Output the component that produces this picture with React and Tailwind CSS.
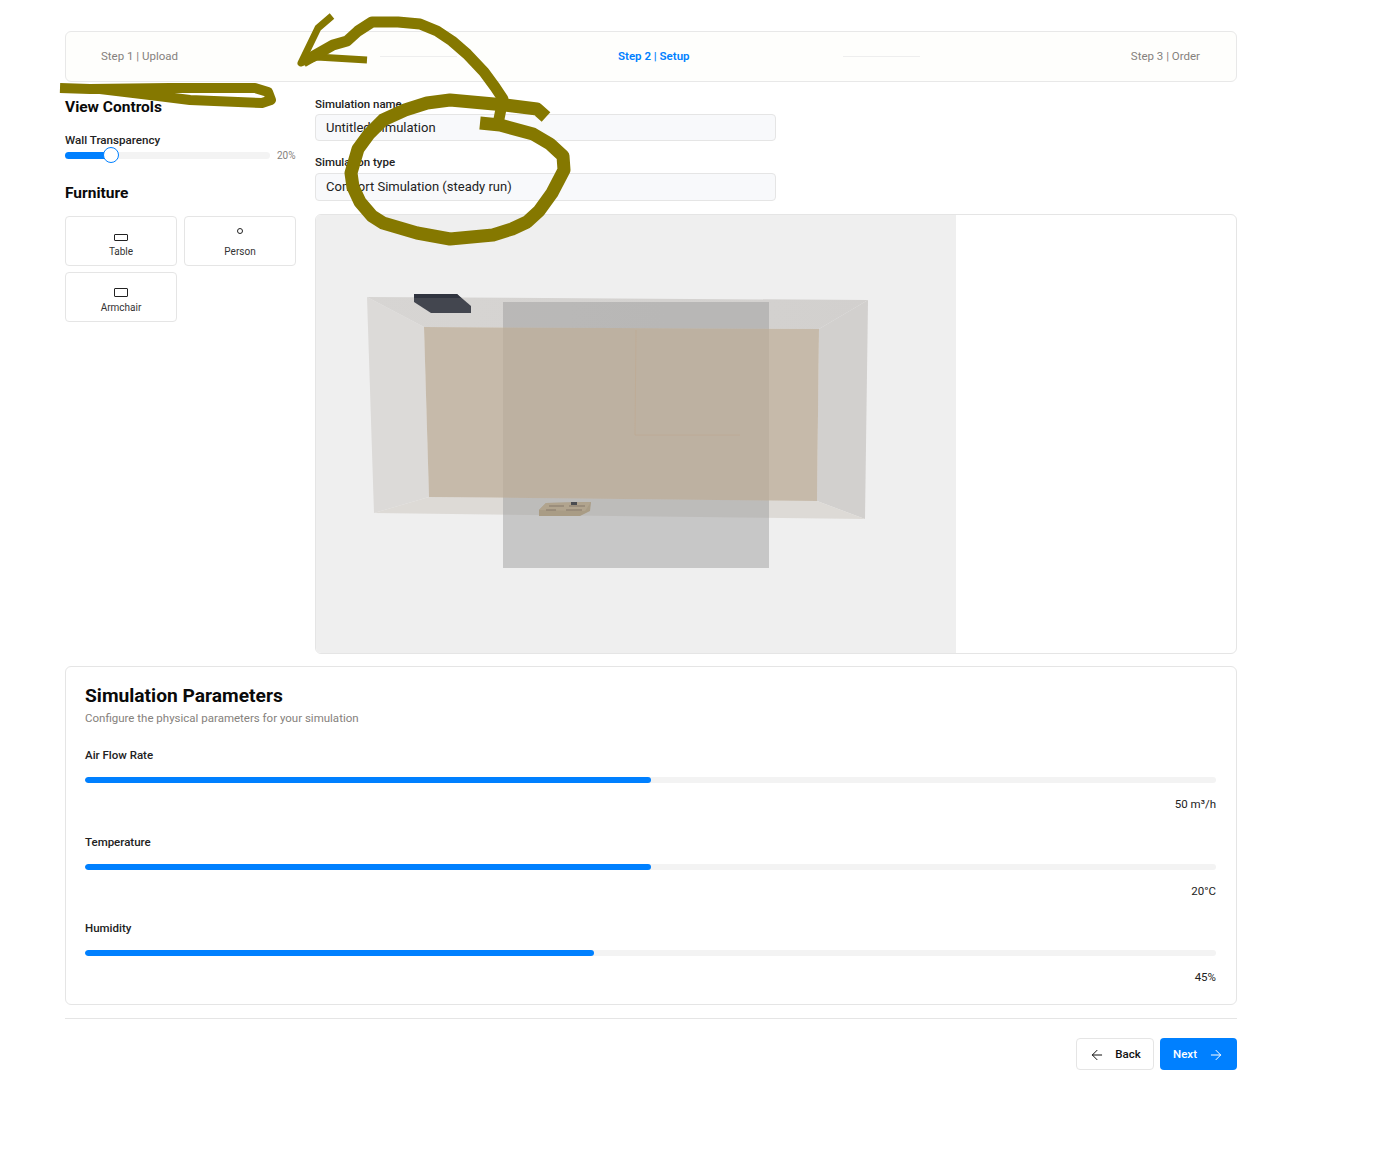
import { ArrowLeft, ArrowRight } from 'lucide-react'

const params = [
  { label: 'Air Flow Rate', value: '50 m³/h', fill: 'w-[50%]' },
  { label: 'Temperature', value: '20°C', fill: 'w-[50%]' },
  { label: 'Humidity', value: '45%', fill: 'w-[45%]' },
]

function Stepper() {
  return (
    <div className="flex h-[51px] items-center rounded-md border border-[#e8e8e8] bg-[#fefefc] pl-[35px] pr-[36px] text-[11.5px] text-[#85817c]">
      <span className="w-[279px]">Step 1 | Upload</span>
      <div className="h-px w-[77px] bg-[#eeeeee]" />
      <span className="ml-[161px] font-semibold text-[#0080ff]">Step 2 | Setup</span>
      <div className="ml-[153px] h-px w-[77px] bg-[#eeeeee]" />
      <span className="ml-auto">Step 3 | Order</span>
    </div>
  )
}

function FurnitureButton({ label, children }) {
  return (
    <button className="flex h-[50px] flex-col items-center justify-end rounded border border-[#e5e5e5] bg-white pb-[6px] text-[10px] leading-[14px] text-[#333333]">
      {children}
      <span className="mt-[4px]">{label}</span>
    </button>
  )
}

function ViewControls() {
  return (
    <aside className="w-[231px] shrink-0">
      <h2 className="mt-[-1px] text-[15.5px] leading-[20px] font-bold text-[#0a0a0a]">View Controls</h2>
      <label className="mt-[15px] block text-[11.6px] leading-4 font-medium text-[#222222]">Wall Transparency</label>
      <div className="mt-[-1px] flex h-4 items-center gap-[7px]">
        <div className="relative h-[7px] w-[205px] rounded-full bg-[#f3f3f3]">
          <div className="h-full w-[46px] rounded-full bg-[#0080ff]" />
          <div className="absolute top-[-5px] left-[38px] size-4 rounded-full border border-[#0080ff] bg-white" />
        </div>
        <span className="text-[10px] text-[#85817c]">20%</span>
      </div>
      <h2 className="mt-[20px] text-[15.5px] leading-[20px] font-bold text-[#0a0a0a]">Furniture</h2>
      <div className="mt-[13px] grid grid-cols-[112px_112px] gap-x-[7px] gap-y-[6px]">
        <FurnitureButton label="Table">
          <span className="h-[7px] w-[14px] rounded-[1px] border-[1.5px] border-[#222222]" />
        </FurnitureButton>
        <FurnitureButton label="Person">
          <span className="mb-[7px] size-[6px] rounded-full border-[1.5px] border-[#222222]" />
        </FurnitureButton>
        <FurnitureButton label="Armchair">
          <span className="h-[9px] w-[14px] rounded-[1px] border-[1.5px] border-[#222222]" />
        </FurnitureButton>
      </div>
    </aside>
  )
}

function Scene() {
  return (
    <svg className="h-full w-[640px] shrink-0 bg-[#efefef]" viewBox="316 215 640 438">
      <defs>
        <linearGradient id="topWall" x1="0" x2="1" y1="0" y2="0">
          <stop offset="0" stopColor="#d7d5d3" />
          <stop offset="1" stopColor="#d2d0ce" />
        </linearGradient>
      </defs>
      <polygon points="367,297 424,327 429,497 374,513" fill="#dcdad8" />
      <polygon points="367,297 868,300 819,329 424,327" fill="url(#topWall)" />
      <polygon points="868,300 865,519 817,501 819,329" fill="#d2d0ce" />
      <polygon points="374,513 429,497 817,501 865,519" fill="#dddad6" />
      <rect x="503" y="302" width="266" height="266" fill="#9a9a9a" fillOpacity="0.48" />
      <polygon points="424,327 819,329 817,501 429,497" fill="#b9aa94" fillOpacity="0.76" />
      <path d="M636 330 L635 435 L740 435" fill="none" stroke="#bfa98f" strokeOpacity="0.6" />
      <polygon points="414,294 457,294 471,306 471,313 431,313 414,302" fill="#43464f" />
      <polygon points="414,294 457,294 461,298 414,298" fill="#30343f" />
      <polygon points="546,503 591,502 590,511 580,516 539,516 539,510" fill="#a99c85" />
      <polygon points="546,503 591,502 585,511 539,510" fill="#b1a48e" />
      <path d="M549 506 H564 M569 506 H585 M546 510 H556 M566 510 H582" stroke="#85796a" strokeWidth="1" />
      <rect x="571" y="502" width="6" height="3" fill="#4a4c50" />
    </svg>
  )
}

function SetupPanel() {
  return (
    <div className="min-w-0 flex-1">
      <label className="mt-[-2px] block text-[11.5px] leading-4 font-medium text-[#222222]">Simulation name</label>
      <div className="mt-[2px] flex h-[27px] w-[461px] items-center rounded border border-[#e5e5e5] bg-[#f8f9fb] px-[10px] text-[13px] text-[#222222]">
        Untitled Simulation
      </div>
      <label className="mt-[13px] block text-[11.5px] leading-4 font-medium text-[#222222]">Simulation type</label>
      <div className="mt-[3px] flex h-[28px] w-[461px] items-center rounded border border-[#e5e5e5] bg-[#f8f9fb] px-[10px] text-[13px] text-[#222222]">
        Comfort Simulation (steady run)
      </div>
      <div className="mt-[13px] flex h-[440px] overflow-hidden rounded-md border border-[#e5e5e5] bg-white">
        <Scene />
      </div>
    </div>
  )
}

function ParameterCard() {
  return (
    <section className="mt-3 h-[339px] rounded-md border border-[#e5e5e5] bg-white pr-[20px] pl-[19px] pt-[17px]">
      <h2 className="text-[19.2px] leading-[24px] font-bold text-[#0a0a0a]">Simulation Parameters</h2>
      <p className="mt-[2px] text-[11.5px] leading-4 text-[#85817c]">Configure the physical parameters for your simulation</p>
      <div className="mt-[21px] flex flex-col gap-[21.5px]">
        {params.map((p) => (
          <div key={p.label} className="h-[65px]">
            <div className="text-[11.5px] leading-4 font-medium text-[#222222]">{p.label}</div>
            <div className="mt-[14px] h-[6px] overflow-hidden rounded-full bg-[#f3f3f3]">
              <div className={`h-full rounded-full bg-[#0080ff] ${p.fill}`} />
            </div>
            <div className="mt-[13px] text-right text-[11.5px] leading-4 text-[#222222]">{p.value}</div>
          </div>
        ))}
      </div>
    </section>
  )
}

function Scribbles() {
  return (
    <svg className="pointer-events-none absolute top-0 left-0 h-[1164px] w-[1392px]" viewBox="0 0 1392 1164">
      <g fill="none" stroke="#857800" strokeWidth="11" strokeLinejoin="round">
        <path d="M332 16 L318 28 L301 63 L317 57 L367 60" strokeWidth="7" />
        <path d="M303 62 L333 45 L347 41 L358 31 L372 22 L398 22 L420 24 L437 31 L452 41 L467 54 L484 72 L495 87 L503 99 L498 124" />
        <path d="M546 117 L537 109 L505 105 L450 100 L427 103 L405 110 L383 120 L369 134 L358 149 L351 173 L353 187 L360 202 L372 216 L383 223 L417 233 L450 239 L493 235 L512 229 L527 222 L539 211 L552 193 L564 170 L563 156 L550 144 L533 134 L500 125 L480 123" strokeWidth="13" />
        <path d="M60 88 L90 89 L170 88 L255 88 L268 92 L271 100 L262 103 L190 100 L150 95 L100 89" strokeWidth="10" />
      </g>
    </svg>
  )
}

export default function App() {
  return (
    <div className="relative h-[1164px] bg-white font-['Roboto',sans-serif]">
      <div className="ml-[65px] w-[1172px] pt-[31px]">
        <Stepper />
        <div className="mt-[16px] flex gap-[19px]">
          <ViewControls />
          <SetupPanel />
        </div>
        <ParameterCard />
        <div className="mt-[13px] border-t border-[#e5e5e5]" />
        <div className="mt-[19px] flex justify-end gap-[6px]">
          <button className="flex h-8 w-[78px] items-center justify-center gap-[10px] rounded border border-[#e5e5e5] bg-white pt-[1px] text-[11.5px] font-medium text-[#111111]">
            <ArrowLeft size={16} strokeWidth={1.5} />
            Back
          </button>
          <button className="flex h-8 w-[77px] items-center justify-center gap-[11px] rounded bg-[#0080ff] pt-[1px] text-[11.5px] font-medium text-white">
            Next
            <ArrowRight size={16} strokeWidth={1.5} />
          </button>
        </div>
      </div>
      <Scribbles />
    </div>
  )
}
